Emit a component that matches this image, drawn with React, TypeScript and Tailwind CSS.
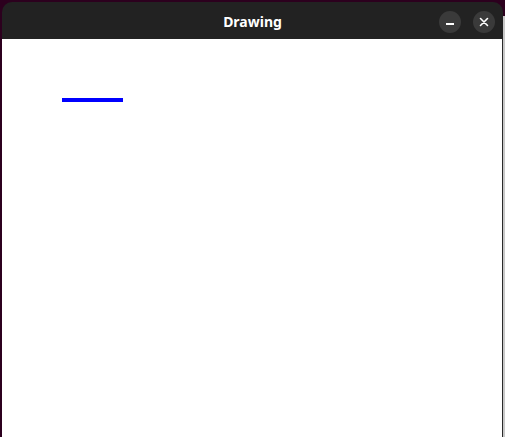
import React from 'react';

const App: React.FC = () => {
  return (
    <div className="w-[505px] h-[437px] bg-[#2c001e] flex overflow-hidden">
      <div className="ml-[2px] mt-[2px] w-[501px] flex flex-col">
        <div className="relative h-[37px] pt-[2px] bg-[#222222] rounded-t-[10px] flex items-center justify-center">
          <span
            className="text-white font-bold text-[14px]"
            style={{ fontFamily: '"Noto Sans", sans-serif' }}
          >
            Drawing
          </span>
          <div className="absolute right-[8px] top-[1px] h-full flex items-center gap-[12px]">
            <button className="w-[22px] h-[22px] rounded-full bg-[#3a3a3a] flex items-center justify-center">
              <span className="block w-[8px] h-[2px] bg-white mt-[4px]" />
            </button>
            <button className="w-[22px] h-[22px] rounded-full bg-[#3a3a3a] flex items-center justify-center">
              <svg width="10" height="10" viewBox="0 0 10 10">
                <path d="M1.5 1.5 L8.5 8.5 M8.5 1.5 L1.5 8.5" stroke="white" strokeWidth="1.6" strokeLinecap="round" />
              </svg>
            </button>
          </div>
        </div>
        <div className="flex-1 bg-white border-r border-[#2a2a2a]">
          <div className="ml-[60px] mt-[59px] w-[61px] h-[4px] bg-[#0000ff]" />
        </div>
      </div>
      <div className="flex-1 bg-[#c8c8c8] mt-[16px]" />
    </div>
  );
};

export default App;
